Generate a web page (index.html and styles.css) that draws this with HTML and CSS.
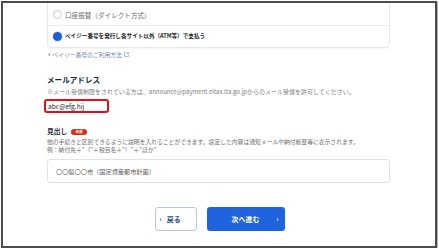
FILE: index.html
```html
<!DOCTYPE html>
<html lang="ja">
<head>
<meta charset="utf-8">
<link rel="stylesheet" href="styles.css">
</head>
<body>
<div class="frame">
  <div class="card">
    <div class="opt opt-first">
      <span class="radio"></span>
      <span class="opt-label opt-light">口座振替（ダイレクト方式）</span>
    </div>
    <div class="opt">
      <span class="radio radio-on"></span>
      <span class="opt-label opt-bold">ペイジー番号を発行し各サイト以外（ATM等）で支払う</span>
    </div>
  </div>
  <div class="link">
    <span class="chev">›</span>ペイジー番号のご利用方法
    <svg class="ext" viewBox="0 0 10 10" width="5" height="5"><path d="M4 1H1v8h8V6" fill="none" stroke="#7d9ac6" stroke-width="1.3"/><path d="M6 1h3v3M9 1L5 5" fill="none" stroke="#7d9ac6" stroke-width="1.3"/></svg>
  </div>

  <h2 class="heading">メールアドレス</h2>
  <p class="note">※メール受信制限をされている方は、announce@payment.eltax.lta.go.jpからのメール受信を許可してください。</p>
  <div class="email">abc@efg.hij</div>

  <h3 class="subheading">見出し<span class="badge">必須</span></h3>
  <p class="desc">他の手続きと区別できるように説明を入れることができます。設定した内容は通知メールや納付履歴等に表示されます。</p>
  <p class="desc desc-ex">例：納付先＋"（"＋税目名＋"）"＋"ほか"</p>
  <div class="input">〇〇県〇〇市（固定資産都市計画）</div>

  <div class="actions">
    <div class="btn btn-back"><span class="bchev">‹</span>戻る</div>
    <div class="btn btn-next">次へ進む<span class="nchev">›</span></div>
  </div>
</div>
</body>
</html>
```
FILE: styles.css
```css
html, body {
  margin: 0;
  padding: 0;
  background: #ffffff;
}
body {
  font-family: "Noto Sans CJK JP", "Noto Sans", sans-serif;
  color: #333;
}
.frame {
  box-sizing: border-box;
  margin: 1px 0 0 1px;
  width: 436px;
  height: 247px;
  border: 2px solid #4c4c4c;
  box-shadow: 1px 1px 0 #b5b5b5;
  overflow: hidden;
  padding: 0 45px 0 44px;
  background: #fff;
}
.card {
  margin-top: -4px;
  border: 1px solid #e8e8e8;
  border-radius: 4px;
  box-shadow: 0 1px 1px rgba(0,0,0,0.04);
}
.opt {
  display: flex;
  align-items: center;
  height: 21px;
  padding-left: 5px;
}
.opt-first {
  height: 25px;
  border-bottom: 1px solid #ececec;
  align-items: flex-end;
}
.opt-first .radio, .opt-first .opt-label {
  margin-bottom: 6px;
}
.radio {
  box-sizing: border-box;
  width: 9px;
  height: 9px;
  border-radius: 50%;
  border: 1px solid #c9c9c9;
  margin-right: 3px;
  flex: none;
}
.radio-on {
  border: none;
  background: #1f5fd6;
  box-shadow: 0 0 0 1px #dfe8f8;
}
.opt-label {
  font-size: 5.6px;
  line-height: 7px;
  color: #6f6f6f;
}
.opt-light {
  font-size: 6.6px;
}
.opt-bold {
  font-weight: 700;
  color: #262626;
}
.link {
  margin-top: 3px;
  font-size: 5.8px;
  line-height: 7px;
  color: #7489b0;
  display: flex;
  align-items: center;
}
.chev {
  color: #2a4f9a;
  font-weight: 700;
  font-size: 7px;
  margin-right: 2px;
  margin-left: 1px;
}
.ext {
  margin-left: 2px;
}
.heading {
  margin: 17px 0 0 0;
  font-size: 7.6px;
  line-height: 9px;
  font-weight: 700;
  color: #1c2a3a;
}
.note {
  margin: 4px 0 0 0;
  font-size: 6px;
  line-height: 7px;
  color: #7f7f7f;
  white-space: nowrap;
}
.email {
  box-sizing: border-box;
  margin: 4px 0 0 -3px;
  width: 65px;
  height: 14px;
  border: 2px solid #e4101c;
  border-radius: 3px;
  padding-left: 2px;
  font-size: 6.6px;
  line-height: 10px;
  color: #2a2a2a;
}
.subheading {
  margin: 14px 0 0 0;
  font-size: 6.8px;
  line-height: 9px;
  font-weight: 700;
  color: #1c2a3a;
  display: flex;
  align-items: center;
}
.badge {
  margin-left: 4px;
  background: #d2321f;
  color: #fff;
  font-size: 3.6px;
  line-height: 6px;
  padding: 0 4px;
  border-radius: 3px;
}
.desc {
  margin: 2px 0 0 0;
  font-size: 5.8px;
  line-height: 7.5px;
  color: #6f6f6f;
  white-space: nowrap;
}
.desc-ex {
  margin-top: 0;
}
.input {
  box-sizing: border-box;
  margin-top: 6px;
  height: 24px;
  border: 1px solid #e2e2e2;
  border-radius: 3px;
  padding-left: 8px;
  display: flex;
  align-items: center;
  font-size: 6.2px;
  color: #5a5a5a;
}
.actions {
  margin-top: 24px;
  display: flex;
  justify-content: center;
  gap: 10px;
  padding-left: 2px;
}
.btn {
  box-sizing: border-box;
  height: 24px;
  border-radius: 3px;
  display: flex;
  align-items: center;
  font-size: 7px;
  font-weight: 700;
}
.btn-back {
  width: 42px;
  border: 1px solid #b9c7dd;
  background: #fff;
  color: #2c4f8c;
  padding-left: 4px;
}
.bchev {
  font-size: 7px;
  margin-right: 5px;
}
.btn-next {
  width: 78px;
  background: #1f64dc;
  color: #fff;
  justify-content: center;
  position: relative;
}
.nchev {
  position: absolute;
  right: 6px;
  top: 7px;
  font-size: 7px;
  line-height: 10px;
}
```
